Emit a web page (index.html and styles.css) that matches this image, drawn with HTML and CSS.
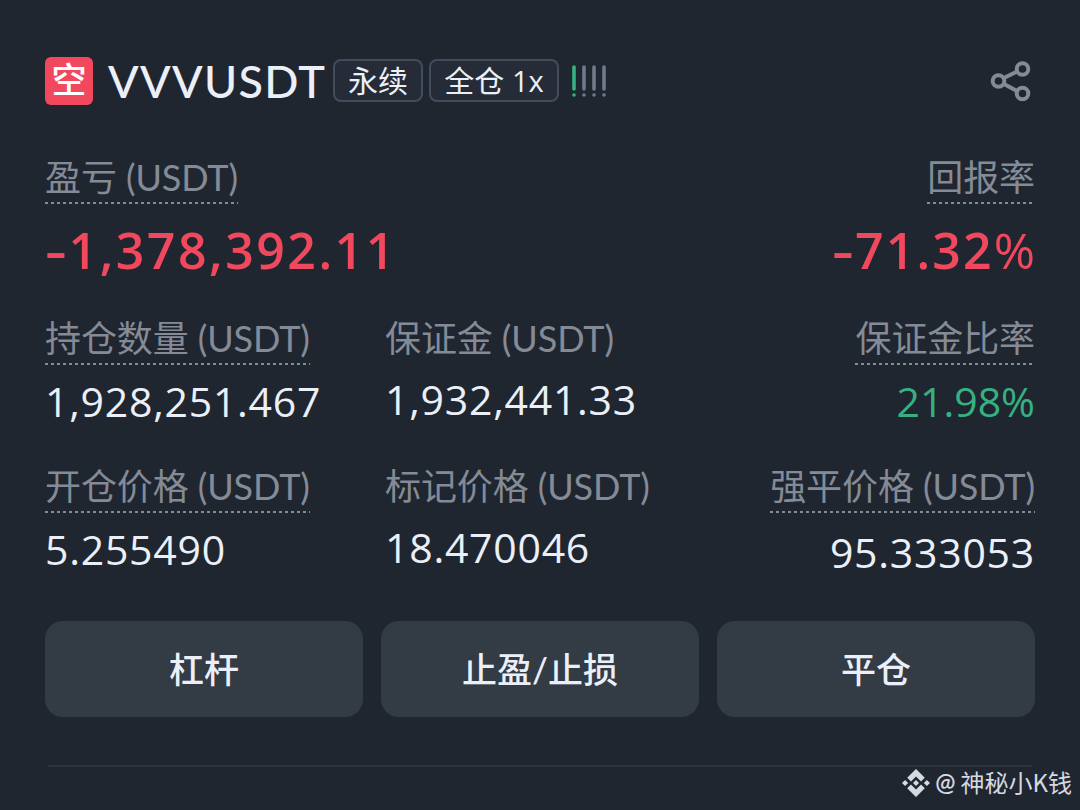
FILE: index.html
```html
<!DOCTYPE html>
<html lang="zh-CN">
<head>
    <meta charset="UTF-8">
    <meta name="viewport" content="width=device-width, initial-scale=1.0">
    <title>VVVUSDT 永续</title>
    <link rel="stylesheet" href="styles.css">
</head>
<body>
    <div class="position">
        <div class="header">
            <span class="side">空</span>
            <h1 class="symbol">VVVUSDT</h1>
            <span class="tag tag-type">永续</span>
            <span class="tag tag-margin">全仓 <span class="num">1x</span></span>
            <svg class="risk" width="36" height="32" viewBox="0 0 36 32" stroke-width="3.6" stroke-linecap="round">
                <path class="risk-on" d="M3 2V24M3 30V30.01"/>
                <path class="risk-off" d="M13 2V24M13 30V30.01M23 2V24M23 30V30.01M33 2V24M33 30V30.01"/>
            </svg>
            <svg class="share" width="42" height="42" viewBox="0 0 42 42" fill="none" stroke-width="4">
                <circle cx="8.5" cy="21" r="5.8"/>
                <circle cx="32.5" cy="9" r="5.8"/>
                <circle cx="32.5" cy="33.5" r="5.8"/>
                <path d="M13.5 18.2L27.5 11.2M13.5 23.8L27.5 31.2"/>
            </svg>
        </div>

        <div class="summary">
            <div class="cell">
                <div class="label dashed">盈亏 (USDT)</div>
                <div class="pnl"><span class="minus">-</span>1,378,392.11</div>
            </div>
            <div class="cell right">
                <div class="label dashed">回报率</div>
                <div class="pnl roi"><span class="minus">-</span>71.32<span class="percent">%</span></div>
            </div>
        </div>

        <div class="details">
            <div class="cell">
                <div class="label dashed">持仓数量 (USDT)</div>
                <div class="value">1,928,251.467</div>
            </div>
            <div class="cell">
                <div class="label">保证金 (USDT)</div>
                <div class="value">1,932,441.33</div>
            </div>
            <div class="cell right">
                <div class="label dashed">保证金比率</div>
                <div class="value green">21.98%</div>
            </div>
            <div class="cell">
                <div class="label dashed">开仓价格 (USDT)</div>
                <div class="value">5.255490</div>
            </div>
            <div class="cell">
                <div class="label">标记价格 (USDT)</div>
                <div class="value">18.470046</div>
            </div>
            <div class="cell right">
                <div class="label dashed">强平价格 (USDT)</div>
                <div class="value liq">95.333053</div>
            </div>
        </div>

        <div class="actions">
            <button>杠杆</button>
            <button>止盈/止损</button>
            <button>平仓</button>
        </div>

        <div class="divider"></div>
    </div>

    <div class="watermark">
        <svg width="28" height="28" viewBox="0 0 28 28">
            <path d="M14 0L22.8 8.8L19 12.6L14 7.6L9 12.6L5.2 8.8Z"/>
            <path d="M14 28L22.8 19.2L19 15.4L14 20.4L9 15.4L5.2 19.2Z"/>
            <path d="M3.1 10.9L6.2 14L3.1 17.1L0 14Z"/>
            <path d="M24.9 10.9L28 14L24.9 17.1L21.8 14Z"/>
            <path d="M14 11L17 14L14 17L11 14Z"/>
        </svg>
        <span class="at">@</span>
        <span>神秘小K钱</span>
    </div>
</body>
</html>
```

FILE: styles.css
```css
* {
    box-sizing: border-box;
}

body {
    margin: 0;
    height: 810px;
    overflow: hidden;
    position: relative;
    background-color: #202630;
    color: #eaeff8;
    font-family: Lato, "Noto Sans CJK SC", sans-serif;
}

.position {
    padding: 57px 45px 0;
}

.header {
    display: flex;
    align-items: center;
    height: 48px;
}

.side {
    width: 48px;
    height: 48px;
    border-radius: 6px;
    background-color: #f2485e;
    color: #fff;
    font-size: 35px;
    font-weight: 500;
    line-height: 44px;
    text-align: center;
}

.symbol {
    width: 225px;
    margin: 0 0 0 15px;
    font-size: 45px;
    font-weight: 500;
    line-height: 48px;
    letter-spacing: 1.3px;
    white-space: nowrap;
}

.tag {
    height: 43px;
    margin-bottom: 2px;
    border: 2px solid #434c5a;
    border-radius: 8px;
    background-color: #252c37;
    font-size: 30px;
    line-height: 38px;
    text-align: center;
    white-space: nowrap;
}

.tag-type {
    width: 90px;
}

.tag-margin {
    width: 130px;
    margin-left: 6px;
}

.num {
    font-family: "Open Sans", sans-serif;
    font-size: 29px;
}

.risk {
    margin-left: 12px;
}

.risk-on {
    stroke: #35b182;
}

.risk-off {
    stroke: #707a8a;
}

.share {
    margin-left: auto;
    margin-right: 3px;
    stroke: #848b97;
}

.summary {
    display: flex;
    justify-content: space-between;
    margin-top: 49px;
    height: 161px;
}

.details {
    display: grid;
    grid-template-columns: 340px 300px 350px;
    grid-template-rows: 148px 148px;
}

.cell {
    display: flex;
    flex-direction: column;
    align-items: flex-start;
}

.right {
    align-items: flex-end;
}

.label {
    height: 48px;
    color: #848b97;
    font-size: 36px;
    line-height: 46px;
    letter-spacing: -0.1px;
    white-space: nowrap;
}

.dashed {
    height: 50px;
    background: repeating-linear-gradient(90deg, #848b97 0 3px, transparent 3px 6px) 0 100% / 100% 2px no-repeat;
}

.pnl {
    margin-top: 16px;
    color: #f2485e;
    font-family: "Open Sans", sans-serif;
    font-size: 50px;
    font-weight: 650;
    line-height: 60px;
    letter-spacing: 2.5px;
}

.roi {
    letter-spacing: 2.1px;
}

.minus {
    display: inline-block;
    margin-right: 5px;
    transform: scaleX(1.35);
    transform-origin: 0 50%;
}

.percent {
    font-weight: 500;
    letter-spacing: 0;
}

.value {
    margin-top: 11px;
    font-family: "Open Sans", sans-serif;
    font-size: 41px;
    line-height: 50px;
    letter-spacing: 0.75px;
}

.green {
    color: #35b182;
    letter-spacing: 0;
}

.liq {
    margin-top: 14px;
}

.actions {
    display: grid;
    grid-template-columns: repeat(3, 1fr);
    gap: 18px;
    margin-top: 10px;
}

.actions button {
    height: 96px;
    padding: 0 0 3px;
    border: 0;
    border-radius: 18px;
    background-color: #333b45;
    color: #eaeff8;
    font-family: inherit;
    font-size: 35px;
    font-weight: 500;
}

.divider {
    height: 2px;
    margin: 48px 3px 0;
    background-color: #2e3541;
}

.watermark {
    position: absolute;
    right: 8px;
    bottom: 9px;
    display: flex;
    align-items: center;
    height: 36px;
    color: #d5d9e0;
    font-family: "Noto Sans CJK SC", sans-serif;
    font-size: 24px;
    line-height: 32px;
    white-space: nowrap;
}

.watermark svg {
    fill: #d5d9e0;
}

.watermark span {
    padding-bottom: 3px;
}

.at {
    margin: 0 5px;
    font-family: Lato, sans-serif;
    font-weight: 600;
}
```
